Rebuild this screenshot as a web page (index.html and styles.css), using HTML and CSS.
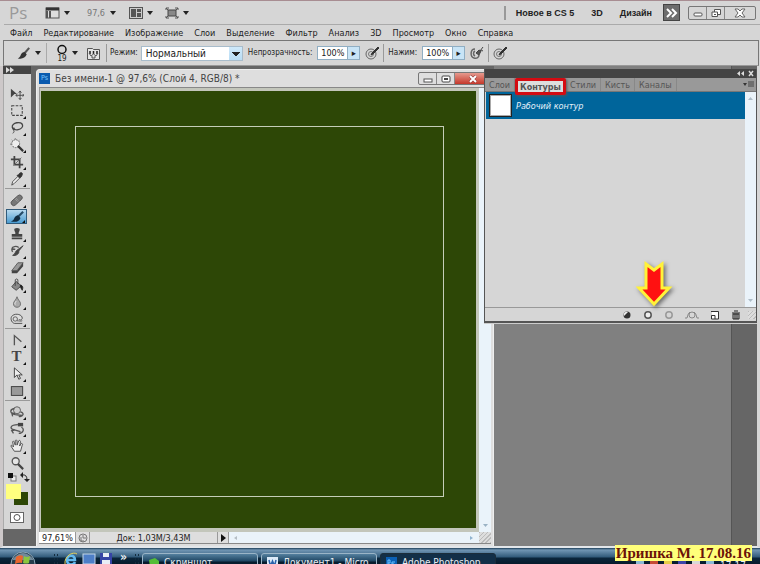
FILE: index.html
```html
<!DOCTYPE html>
<html lang="ru">
<head>
<meta charset="utf-8">
<title>Без имени-1</title>
<link rel="stylesheet" href="styles.css">
</head>
<body>
<div class="app">
  <header class="appbar">
    <span class="logo">Ps</span>
    <button class="drop drop-bridge" aria-label="Вид"><svg width="15" height="12" viewBox="0 0 15 12"><rect x="1" y="1" width="13" height="10" fill="#ddd" stroke="#555"/><path d="M1 2h13" stroke="#333" stroke-width="3"/><path d="M2 4v7M5 4v7" stroke="#555" stroke-width="2"/></svg></button>
    <button class="drop drop-scale">97,6</button>
    <button class="drop drop-arrange" aria-label="Упорядочить"><svg width="14" height="12" viewBox="0 0 14 12"><rect x=".5" y=".5" width="13" height="11" fill="#ccc" stroke="#555"/><path d="M2 2h5v8H2zM8 2h4v3H8zM8 6h4v4H8z" fill="#555"/></svg></button>
    <button class="drop" aria-label="Режим экрана"><svg width="14" height="12" viewBox="0 0 14 12"><rect x="3" y="3" width="8" height="6" fill="#888" stroke="#444"/><path d="M1 3V1h3M10 1h3v2M1 9v2h3M10 11h3V9M1 1l2 2M13 1l-2 2M1 11l2-2M13 11l-2-2" fill="none" stroke="#555"/></svg></button>
    <nav class="spaces">
      <button class="space">Новое в CS 5</button>
      <button class="space">3D</button>
      <button class="space">Дизайн</button>
    </nav>
    <button class="more" aria-label="Ещё"><svg width="12" height="10" viewBox="0 0 12 10"><path d="M1 1l4 4-4 4M6 1l4 4-4 4" fill="none" stroke="#fff" stroke-width="2"/></svg></button>
    <div class="winbtns">
      <button aria-label="Свернуть"><svg width="10" height="10" viewBox="0 0 10 10"><rect x="1" y="5" width="8" height="3" rx="1" fill="#fff" stroke="#555"/></svg></button>
      <button aria-label="Восстановить"><svg width="10" height="10" viewBox="0 0 10 10"><path d="M3.500 1.500h6v5h-6z" fill="#fff" stroke="#555"/><path d="M1 4h5.500v4.500H1z" fill="#fff" stroke="#555"/><path d="M3 6.500h2" stroke="#555"/></svg></button>
      <button class="wide" aria-label="Закрыть"><svg width="12" height="10" viewBox="0 0 12 10"><path d="M1 1h3l2 2 2-2h3L8 5l3 4H8L6 7 4 9H1l3-4z" fill="#fff" stroke="#666"/></svg></button>
    </div>
  </header>

  <nav class="menubar">
    <button>Файл</button><button>Редактирование</button><button>Изображение</button><button>Слои</button><button>Выделение</button><button>Фильтр</button><button>Анализ</button><button>3D</button><button>Просмотр</button><button>Окно</button><button>Справка</button>
  </nav>

  <div class="options">
    <button class="drop opt-tool" aria-label="Кисть"><svg width="15" height="13" viewBox="0 0 16 16"><path d="M15 1L9 8" stroke="#555" stroke-width="2.500"/><path d="M9 6l3 3c-2 5-6 6-11 5 3-1 3-3 4-5s3-3 4-3z" fill="#333"/></svg></button>
    <button class="drop opt-size"><span class="tip"><svg width="12" height="11" viewBox="0 0 12 11"><circle cx="6" cy="5.500" r="4" fill="none" stroke="#111" stroke-width="1.500"/></svg>19</span></button>
    <button class="opt-panel" aria-label="Панель кистей"><svg width="13" height="13" viewBox="0 0 13 13"><path d="M.5 1.500h5l1 1h6v10H.5z" fill="#e4e4e4" stroke="#555"/><path d="M3 4v3M6.500 4v3M10 4v3" stroke="#222" stroke-width="1.500"/><path d="M2 6l2 3 2.500-2L9 9l2-3M5 9v2h3V9" fill="none" stroke="#555"/></svg></button>
    <label for="mode" class="mode-label">Режим:</label>
    <select id="mode" class="mode"><option>Нормальный</option></select>
    <label for="opacity">Непрозрачность:</label>
    <span class="num"><input id="opacity" value="100%"><button aria-label="Изменить непрозрачность">▸</button></span>
    <button class="target" aria-label="Нажим и непрозрачность"><svg width="14" height="14" viewBox="0 0 14 14"><circle cx="6" cy="8" r="5" fill="none" stroke="#666"/><circle cx="6" cy="8" r="2.500" fill="none" stroke="#777"/><path d="M13 1L7 7l-1 2 2-1 6-6z" fill="#333" stroke="#333"/></svg></button>
    <label for="flow" class="sep">Нажим:</label>
    <span class="num"><input id="flow" value="100%"><button aria-label="Изменить нажим">▸</button></span>
    <button class="target" aria-label="Аэрограф"><svg width="14" height="14" viewBox="0 0 14 14"><path d="M5 3C0 3 0 11 4 12c3 1 5-1 5-3M5 5c-2 1-2 4 0 5" fill="none" stroke="#666" stroke-width="1.500"/><path d="M6 7l3 2 2-4-2-1zM10 5l3-4M11 4l2 1" fill="#555" stroke="#444"/></svg></button>
    <button class="target sep" aria-label="Нажим и размер"><svg width="14" height="14" viewBox="0 0 14 14"><circle cx="6" cy="8" r="5" fill="none" stroke="#666"/><circle cx="6" cy="8" r="2.500" fill="none" stroke="#777"/><path d="M13 1L7 7l-1 2 2-1 6-6z" fill="#333" stroke="#333"/></svg></button>
  </div>

  <main class="work">
    <aside class="tools">
      <div class="tools-head"><svg width="8" height="6" viewBox="0 0 8 6"><path d="M0 0l4 3-4 3zM4 0l4 3-4 3z" fill="#ddd"/></svg></div>
      <div class="tools-body">
        <div class="group">
          <button class="plain" aria-label="Перемещение"><svg viewBox="0 0 16 16"><path d="M1 2l7 6H5l-4 4z" fill="#444"/><path d="M11.500 5v9M7 9.500h9M10 6.500l1.500-2 1.500 2M10 12.500l1.500 2 1.500-2M8.500 8l-2 1.500 2 1.500M14.500 8l1.500 1.500-1.500 1.500" fill="none" stroke="#444"/></svg></button>
          <button aria-label="Область"><svg viewBox="0 0 16 16"><rect x="2" y="2" width="12" height="11" fill="none" stroke="#444" stroke-width="1.200" stroke-dasharray="3 1.500"/></svg></button>
          <button aria-label="Лассо"><svg viewBox="0 0 16 16"><ellipse cx="8.500" cy="6" rx="6" ry="4" transform="rotate(-12 8 6)" fill="none" stroke="#444" stroke-width="1.500"/><path d="M4 8c-2 1 0 3 1 1s-2-1-1 1 1 3-1 4" fill="none" stroke="#444"/></svg></button>
          <button aria-label="Волшебная палочка"><svg viewBox="0 0 16 16"><circle cx="6.500" cy="6.500" r="4.500" fill="#eee" stroke="#555" stroke-dasharray="2 1"/><path d="M9 9l6 6" stroke="#333" stroke-width="2.500"/><path d="M6 0v2M0 7h2M2 2l1 1M11 2l-1 1" stroke="#777"/></svg></button>
          <button aria-label="Рамка"><svg viewBox="0 0 16 16"><path d="M5 1v10h10M1 5h10v10" fill="none" stroke="#444" stroke-width="2"/><path d="M4 12l9-9" stroke="#666"/></svg></button>
          <button aria-label="Пипетка"><svg viewBox="0 0 16 16"><path d="M10 3c1-3 5-3 4 0s-2 3-3 4L8 4z" fill="#333" stroke="#333"/><path d="M9 5L3 11l-1 4 3-2 6-6z" fill="#eee" stroke="#444"/></svg></button>
        </div>
        <div class="group">
          <button aria-label="Восстанавливающая кисть"><svg viewBox="0 0 16 16"><rect x="0" y="5" width="15" height="6" rx="3" transform="rotate(-42 8 8)" fill="#777" stroke="#555"/><path d="M6 7l4 4M7 6l4 4" stroke="#bbb" stroke-dasharray="1 1"/></svg></button>
          <button class="on" aria-label="Кисть"><svg viewBox="0 0 16 16"><path d="M15 2L9 8" stroke="#254a66" stroke-width="2.500"/><path d="M9 6l3 3c-2 5-6 5-11 4 3-1 3-2 4-4s3-3 4-3z" fill="#122b40"/></svg></button>
          <button aria-label="Штамп"><svg viewBox="0 0 16 16"><path d="M5 2q3-2 6 0c1 2-2 4-1 6h4v3H2V8h4c1-2-2-4-1-6z" fill="#444"/><path d="M2 13h12" stroke="#444" stroke-width="2"/></svg></button>
          <button aria-label="Архивная кисть"><svg viewBox="0 0 16 16"><path d="M15 2l-5 6c1 3-3 6-7 5 3-1 3-5 5-6z" fill="#444" stroke="#444"/><path d="M3 9C0 4 6 1 10 4M3 3v3h3" fill="none" stroke="#555" stroke-width="1.500"/></svg></button>
          <button aria-label="Ластик"><svg viewBox="0 0 16 16"><path d="M9 2h6l-7 9H2z" fill="#999" stroke="#555"/><path d="M2 11h6v3H2zM8 11l7-9v4l-7 8z" fill="#444"/></svg></button>
          <button aria-label="Заливка"><svg viewBox="0 0 16 16"><path d="M7 4l6 5-6 5-5-4z" fill="#888" stroke="#444"/><path d="M6 9V2q2-2 3 0v5" fill="none" stroke="#444"/><path d="M12 8c3 1 3 3 2 6-1-2-3-4-2-6z" fill="#222" stroke="#222"/></svg></button>
          <button aria-label="Размытие"><svg viewBox="0 0 16 16"><path d="M8 2c1 4 4 5 4 8s-2 4-4 4-4-1-4-4 3-4 4-8z" fill="#aaa" stroke="#666"/><path d="M7 7c-1 2-2 2-1 4" stroke="#eee" fill="none"/></svg></button>
          <button aria-label="Губка"><svg viewBox="0 0 16 16"><path d="M14 13H5c-4-1-5-7-2-9 4-3 11-1 11 3 0 2-3 3-4 1" fill="#ddd" stroke="#444"/><circle cx="6" cy="8" r="2.500" fill="none" stroke="#555"/><path d="M8 10c2 0 4 1 6 0" fill="none" stroke="#555"/></svg></button>
        </div>
        <div class="group">
          <button aria-label="Перо"><svg viewBox="0 0 16 16"><path d="M5 14V3l8 7" fill="none" stroke="#555" stroke-width="1.500"/></svg></button>
          <button class="type" aria-label="Текст">T</button>
          <button aria-label="Выделение контура"><svg viewBox="0 0 16 16"><path d="M5 1v11l3-3 2 5 2-1-2-4h4z" fill="#eee" stroke="#333"/></svg></button>
          <button aria-label="Прямоугольник"><svg viewBox="0 0 16 16"><rect x="1.500" y="3" width="13" height="10" fill="#999" stroke="#333"/></svg></button>
        </div>
        <div class="group">
          <button aria-label="Поворот 3D"><svg viewBox="0 0 16 16"><circle cx="8" cy="6" r="4" fill="#ccc" stroke="#555"/><path d="M5 4C-1 5 0 10 6 11l8 1M12 8c5 1 3 6-2 5M3 13l-1-4 4 1" fill="none" stroke="#555" stroke-width="1.500"/></svg></button>
          <button aria-label="Камера 3D"><svg viewBox="0 0 16 16"><path d="M9 3C0 3-1 8 5 9l7 2M13 6c4 2 2 7-3 7M4 13l-2-3 4-1" fill="none" stroke="#555" stroke-width="1.500"/><path d="M9 1h6v4H9z" fill="#444"/></svg></button>
          <button aria-label="Рука"><svg viewBox="0 0 16 16"><path d="M5 14L1 8c0-1 1-1 2 0l1 1-1-6c1-1 2 0 2 1l1 3V2c0-1 2-1 2 0v5l2-5c1-1 2 0 2 1l-1 5 2-3c1 0 2 1 1 2l-2 7z" fill="#eee" stroke="#444"/></svg></button>
          <button class="plain" aria-label="Масштаб"><svg viewBox="0 0 16 16"><circle cx="6.500" cy="6" r="4" fill="#e5e5e5" stroke="#555" stroke-width="1.500"/><path d="M9 9l6 6" stroke="#444" stroke-width="2.500"/></svg></button>
        </div>
        <svg class="swatches" width="26" height="36" viewBox="0 0 26 36"><rect x="6" y="4" width="5" height="5" fill="#eee" stroke="#777"/><rect x="3" y="1" width="5" height="5" fill="#111"/><path d="M17 3q5-1 5 5" fill="none" stroke="#222"/><path d="M18 0v6l-3-3zM19 7h6l-3 3z" fill="#222"/><rect x="9" y="20" width="14" height="13" fill="#2d4706"/><rect x="1" y="12" width="15" height="15" fill="#ffff7f"/></svg>
        <button class="mask" aria-label="Быстрая маска"><svg width="14" height="11" viewBox="0 0 14 11"><rect x=".5" y=".5" width="13" height="10" fill="#fff" stroke="#666"/><circle cx="7" cy="5.500" r="3" fill="none" stroke="#555"/></svg></button>
      </div>
    </aside>

    <section class="doc">
      <div class="doc-title">
        <span class="ps">Ps</span>
        <h1>Без имени-1 @ 97,6% (Слой 4, RGB/8) *</h1>
        <div class="winbtns docbtns">
          <button aria-label="Свернуть"><svg width="10" height="8" viewBox="0 0 10 8"><rect x="1" y="4" width="8" height="3" fill="#fff" stroke="#555"/></svg></button>
          <button aria-label="Развернуть"><svg width="10" height="8" viewBox="0 0 10 8"><rect x="1" y="1" width="8" height="6" rx="1" fill="#fff" stroke="#444"/><rect x="3.500" y="3.500" width="3" height="1" stroke="#444"/></svg></button>
          <button class="close" aria-label="Закрыть"><svg width="10" height="8" viewBox="0 0 10 8"><path d="M2 1l6 6M8 1L2 7" stroke="#833" stroke-width="3"/><path d="M2 1l6 6M8 1L2 7" stroke="#fff" stroke-width="2"/></svg></button>
        </div>
      </div>
      <div class="doc-body">
        <div class="canvas"><div class="path"></div></div>
        <div class="vscroll"><svg width="7" height="4" viewBox="0 0 7 4"><path d="M1 0h5L3.500 3z" fill="#9ab2c4"/></svg></div>
      </div>
      <footer class="doc-status">
        <span class="pct">97,61%</span>
        <span class="clock"><svg width="10" height="10" viewBox="0 0 10 10"><circle cx="5" cy="5" r="4" fill="none" stroke="#777"/><path d="M5 2v3h3M3 4v4h3" fill="none" stroke="#777"/></svg></span>
        <span class="size">Док: 1,03M/3,43M</span>
        <button class="play" aria-label="Показать"><svg width="5" height="8" viewBox="0 0 5 8"><path d="M0 0l5 4-5 4z" fill="#111"/></svg></button>
        <span class="hscroll"><svg width="4" height="6" viewBox="0 0 4 6"><path d="M3 1v4L0 3z" fill="#b4bdc4"/></svg><svg width="4" height="6" viewBox="0 0 4 6"><path d="M0 1l3 2-3 2z" fill="#8fb3cf"/></svg></span>
        <span class="grip"></span>
      </footer>
    </section>
    <div class="desk"></div>
    <div class="dock"></div>

    <section class="panel">
      <div class="panel-head"><svg width="22" height="7" viewBox="0 0 22 7"><path d="M6 1v5L3 3.500zM10 1v5L7 3.500z" fill="#ddd"/><path d="M15 1l4 5M19 1l-4 5" stroke="#ddd" stroke-width="1.500"/></svg></div>
      <div class="tabs">
        <button>Слои</button><button class="active">Контуры</button><button>Стили</button><button>Кисть</button><button>Каналы</button>
        <button class="pmenu" aria-label="Меню панели"><svg width="11" height="7" viewBox="0 0 11 7"><path d="M0 2h4L2 5z" fill="#333"/><path d="M5 1h6M5 3h6M5 5h6" stroke="#444"/></svg></button>
      </div>
      <div class="panel-main">
        <div class="list"><div class="row"><span class="thumb"></span><em>Рабочий контур</em></div></div>
        <div class="vscroll pscroll"><svg width="7" height="4" viewBox="0 0 7 4"><path d="M1 4h5L3.500 1z" fill="#aebdc8"/></svg><svg width="7" height="4" viewBox="0 0 7 4"><path d="M1 0h5L3.500 3z" fill="#aebdc8"/></svg></div>
      </div>
      <div class="panel-foot">
        <button aria-label="Залить контур"><svg width="10" height="10" viewBox="0 0 10 10"><circle cx="5" cy="5" r="3.500" fill="#333"/><path d="M2 6a3 3 0 014-4z" fill="#eee"/></svg></button>
        <button aria-label="Обвести контур"><svg width="10" height="10" viewBox="0 0 10 10"><circle cx="5" cy="5" r="3.200" fill="#eee" stroke="#555" stroke-width="1.500"/></svg></button>
        <button aria-label="Контур в выделение"><svg width="10" height="10" viewBox="0 0 10 10"><circle cx="5" cy="5" r="3.200" fill="none" stroke="#999" stroke-width="1.500"/></svg></button>
        <button aria-label="Выделение в контур"><svg width="14" height="10" viewBox="0 0 14 10"><circle cx="7" cy="5" r="3" fill="none" stroke="#888"/><path d="M0 8h2q1-5 3-6M14 8h-2q-1-5-3-6" fill="none" stroke="#888"/></svg></button>
        <button aria-label="Новый контур"><svg width="10" height="10" viewBox="0 0 10 10"><path d="M2 2h6v7H2z" fill="#fff"/><path d="M1 1.500h7.500V9H1.500V5.500H5V9" fill="none" stroke="#333"/></svg></button>
        <button aria-label="Удалить контур"><svg width="10" height="10" viewBox="0 0 10 10"><path d="M2 4h6v5H2z" fill="#ccc" stroke="#222"/><path d="M1 3h8M3 1h4M4 4v5M6 4v5" stroke="#222"/></svg></button>
        <span class="grip"></span>
      </div>
      <svg class="pointer" width="42" height="48" viewBox="0 0 42 48"><path d="M11 3l8 6 8-6v24h7L19 43 4 27h7z" fill="#f11" stroke="#fff23a" stroke-width="3"/></svg>
    </section>
  </main>

  <footer class="taskbar">
    <button class="start" aria-label="Пуск"><svg width="26" height="26" viewBox="0 0 26 26"><circle cx="13" cy="13" r="12" fill="#253c4c" stroke="#8ba4b5"/><path d="M2 9q11-14 22 0z" fill="#71899a"/><path d="M6 6q4-3 7-1l-1 7q-3-1-7 1z" fill="#e9662f"/><path d="M14 5q3 2 6 0l-1 7q-3 1-6 0z" fill="#8bc63e"/><path d="M5 14q4-2 7 0v6H5z" fill="#49a0e0"/><path d="M13 14h7v6h-7z" fill="#f4cc38"/></svg></button>
    <span class="dots"></span>
    <span class="quick">
      <svg width="14" height="14" viewBox="0 0 14 14"><path d="M3 8h8c0-6-8-5-8 0 0 6 7 5 8 2" fill="none" stroke="#63b9ef" stroke-width="2.500"/><path d="M1 12C0 4 9-1 13 2" fill="none" stroke="#e8d35a"/></svg>
      <svg width="14" height="14" viewBox="0 0 14 14"><rect x="1" y="2" width="12" height="10" fill="#4e7fc7" stroke="#c4d7e8"/></svg>
      <svg width="12" height="14" viewBox="0 0 12 14"><rect width="12" height="14" y="1" fill="#3644a6"/><path d="M3 1h6v4H3zM2 8h8v6H2z" fill="#e8edf6"/></svg>
    </span>
    <span class="chev">»</span>
    <span class="dots"></span>
    <button class="task"><svg width="11" height="11" viewBox="0 0 11 11"><path d="M1 3l6-2 4 3v6H2z" fill="#55bd37"/></svg>Скриншот</button>
    <button class="task"><svg width="11" height="11" viewBox="0 0 11 11"><rect width="11" height="11" fill="#dceaf8"/><path d="M2 3l1.500 6 2-5 2 5L9 3" fill="none" stroke="#2861ab" stroke-width="1.500"/></svg>Документ1 - Micro...</button>
    <button class="task pressed"><svg width="11" height="11" viewBox="0 0 11 11"><rect width="11" height="11" fill="#0b60b5"/><path d="M2 9V3h2v3H2M9 5H6v2h2v2H6" fill="none" stroke="#6bc2ff"/></svg>Adobe Photoshop ...</button>
    <span class="tray"><i></i><i></i><i></i><i></i><i></i><i></i><span>17:17</span></span>
  </footer>
  <div class="stamp">Иришка М. 17.08.16</div>
</div>
</body>
</html>
```
FILE: styles.css
```css
* { box-sizing: border-box; }
body { margin: 0; background: #d6d6d6; overflow: hidden; font-family: "DejaVu Sans Condensed", "DejaVu Sans", sans-serif; font-size: 9px; line-height: 12px; color: #222; }
button { appearance: none; border: 0; padding: 0; margin: 0; background: none; font: inherit; color: inherit; display: flex; align-items: center; justify-content: center; }
svg { display: block; flex: none; }
.app { position: relative; height: 100vh; display: flex; flex-direction: column; border-top: 1px solid #a88d92; }

.appbar { flex: none; height: 24px; display: flex; align-items: center; margin-left: 4px; padding: 0 4px 0 5px; border-bottom: 1px solid #aaa; }
.logo { width: 36px; font: 17px/20px "Open Sans", sans-serif; color: #999; }
.drop { gap: 4px; }
.drop::after { content: ""; border: 3px solid transparent; border-top: 4px solid #222; border-bottom: 0; }
.drop-bridge { margin-right: 17px; }
.drop-scale { margin-right: 13px; color: #777; gap: 5px; }
.drop-arrange { margin-right: 12px; }
.spaces { margin-left: auto; display: flex; align-items: center; gap: 17px; padding-left: 10px; border-left: 2px solid #999; font-family: "Liberation Sans", sans-serif; font-weight: bold; height: 14px; }
.more { width: 17px; height: 17px; background: #6d6d6d; border: 1px solid #444; margin-left: 11px; }
.winbtns { display: flex; margin-left: 8px; border: 1px solid #777; border-radius: 2px; height: 14px; }
.winbtns button { width: 18px; border-right: 1px solid #888; }
.winbtns button:last-child { border-right: 0; }
.winbtns .wide { width: 30px; }

.menubar { flex: none; height: 15px; display: flex; gap: 11px; padding-left: 10px; }
.options { flex: none; height: 26px; display: flex; align-items: center; margin: 0 1px 0 3px; padding-left: 12px; border: 1px solid #777; border-bottom-color: #999; }
.opt-tool { margin-right: 5px; }
.opt-size { padding-left: 9px; border-left: 1px solid #aaa; height: 20px; margin-right: 9px; }
.tip { display: flex; flex-direction: column; align-items: center; font-size: 8px; line-height: 8px; }
.options label { margin-right: 5px; font-size: 8px; line-height: 18px; }
.opt-panel { margin-right: 6px; }
.options .mode-label { border-left: 1px solid #999; padding-left: 3px; margin-right: 3px; }
.mode { appearance: none; width: 102px; height: 15px; padding: 0 14px 0 4px; border: 1px solid #a8bccb; border-radius: 0; font: 10px/13px "DejaVu Sans Condensed", sans-serif; color: #222; background: linear-gradient(45deg, transparent 50%, #222 50%) right 6px top 5px / 4px 4px no-repeat, linear-gradient(-45deg, transparent 50%, #222 50%) right 2px top 5px / 4px 4px no-repeat, linear-gradient(#cfe9fa, #b8dcf4) right / 13px 100% no-repeat, #fff; margin-right: 5px; }
.num { display: flex; width: 43px; height: 14px; border: 1px solid #90aec3; background: #fff; margin-right: 5px; }
.num input { width: 29px; min-width: 0; border: 0; padding: 0 0 0 3px; font: 9px/12px "DejaVu Sans Condensed", sans-serif; background: none; color: #222; }
.num button { width: 12px; background: #c8e4f6; border-left: 1px solid #90aec3; }
.target { height: 18px; margin-right: 4px; }
.sep { border-left: 1px solid #999; padding-left: 4px; }

.work { position: relative; flex: 1; min-height: 0; display: flex; background: #666; border-left: 3px solid #cdc8c9; border-right: 3px solid #d6d6d6; border-bottom: 2px solid #e2e6ea; }
.tools { flex: none; width: 28px; display: flex; flex-direction: column; }
.tools-head { height: 8px; padding: 1px 3px; background: #444; }
.tools-body { background: #d6d6d6; padding: 11px 1px 6px; border-left: 1px solid #aaa; }
.group + .group { border-top: 1px solid #999; margin-top: 1px; padding-top: 2px; }
.group button { position: relative; width: 21px; height: 17px; margin-left: 1px; }
.group svg { width: 14px; height: 14px; }
.group button::after { content: ""; position: absolute; right: 1px; bottom: 0; border-left: 3px solid transparent; border-bottom: 3px solid #111; }
.group .plain::after { display: none; }
.group .on { background: linear-gradient(#b8d9ef, #4a9bd0); border: 1px solid #315b7b; height: 15px; margin-top: 1px; margin-bottom: 1px; }
.group .type { font: bold 15px/17px "Liberation Serif", serif; color: #444; }
.swatches { margin-top: 1px; }
.mask { margin: 4px 0 0 5px; }

.doc { flex: none; width: 60.8%; margin: 3px 0 0 5px; display: flex; flex-direction: column; background: #dedede; border: 1px solid #eee; border-bottom: 0; border-radius: 4px 4px 0 0; padding: 0 2px 2px; }
.doc-title { flex: none; height: 17px; display: flex; align-items: center; gap: 5px; }
.ps { width: 11px; height: 11px; background: #0a5bae; color: #7cc8ff; font-size: 7px; line-height: 11px; text-align: center; }
.doc-title h1 { margin: 0; flex: 1; font-size: 10px; font-weight: normal; line-height: 14px; color: #444; }
.docbtns { height: 13px; }
.docbtns .close { width: 35px; background: linear-gradient(#e69a8e, #c5382a); }
.doc-body { flex: 1; display: flex; border-top: 1px solid #888; border-left: 1px solid #999; }
.canvas { flex: 1; display: flex; padding: 35px 32px 31px 34px; background: #2d4706; border: solid #c3c6bb; border-width: 3px 3px 4px 1px; }
.path { flex: 1; border: 1px solid #c4cdb8; }
.vscroll { width: 12px; background: #eaf3fa; display: flex; flex-direction: column; align-items: center; justify-content: flex-end; padding: 4px 0; }
.doc-status { flex: none; height: 12px; display: flex; align-items: stretch; border-bottom: 1px solid #888; line-height: 12px; }
.pct { width: 36px; padding-left: 3px; background: #fff; }
.clock { width: 15px; padding: 1px 2px; border: solid #999; border-width: 0 1px; }
.size { width: 127px; text-align: center; }
.play { width: 12px; border: solid #999; border-width: 0 1px; }
.hscroll { flex: 1; background: #eaf3fa; display: flex; align-items: center; justify-content: space-between; padding: 0 5px; }
.grip { width: 12px; background: repeating-linear-gradient(135deg, #bbb 0 1px, #ddd 1px 3px); }
.desk { flex: 1; background: #808080; }
.dock { flex: none; width: 26px; border-left: 1px solid #555; background: #666; }

.panel { position: absolute; top: 3px; right: 0; width: 273px; height: 254px; display: flex; flex-direction: column; background: #d6d6d6; border: solid #555; border-width: 0 1px 2px; box-shadow: 0 1px 0 #ccc; }
.panel-head { flex: none; height: 9px; background: #444; display: flex; justify-content: flex-end; padding-top: 1px; }
.tabs { flex: none; height: 14px; display: flex; background: #999; border-bottom: 1px solid #777; color: #555; }
.tabs button { padding: 0 4px; border-right: 1px solid #888; }
.tabs button:first-child { width: 30px; }
.tabs .active { flex: none; align-self: flex-start; width: 51px; height: 17px; background: #ddd; border: 3px solid #d40b12; border-radius: 2px; padding: 0; font-weight: bold; z-index: 1; box-shadow: 1px 1px 3px #555; }
.tabs .pmenu { margin-left: auto; border: 0; padding-right: 2px; }
.panel-main { flex: 1; display: flex; }
.list { flex: 1; }
.row { height: 27px; display: flex; align-items: center; gap: 4px; padding-left: 3px; margin-left: 1px; background: #00659b; color: #e5f2fa; }
.thumb { width: 23px; height: 23px; border: 2px solid #222; outline: 1px solid #aaa; outline-offset: -2px; background: #fff; }
.pscroll { width: 11px; justify-content: space-between; }
.panel-foot { flex: none; height: 14px; border-top: 1px solid #999; display: flex; align-items: center; justify-content: flex-end; gap: 11px; }
.panel-foot .grip { width: 8px; height: 8px; margin-left: -4px; }
.pointer { position: absolute; left: 150px; bottom: 12px; filter: drop-shadow(2px 2px 2px rgba(0, 0, 0, .5)); }

.taskbar { flex: none; height: 16px; overflow: hidden; display: flex; align-items: flex-start; background: linear-gradient(#1c3d57, #7196b4 2px, #315a7a 9px, #0b263c 10px, #061a2b); color: #e8eef4; }
.start { margin: 3px 17px 0 10px; }
.dots { width: 5px; height: 14px; margin-top: 5px; background: radial-gradient(#142c3e 1px, transparent 1px) 0 0 / 3px 4px; }
.quick { display: flex; gap: 4px; margin: 4px 8px 0 6px; }
.chev { margin: 3px 5px 0 0; font-size: 12px; font-weight: bold; width: 9px; }
.task { flex: none; width: 116px; height: 24px; margin: 5px 0 0 3px; padding-left: 5px; gap: 5px; align-items: flex-start; justify-content: flex-start; padding-top: 3px; border: 1px solid #9bb5c7; border-radius: 3px; background: linear-gradient(#54809f, #1f4663 7px, #071c2e 8px); font-size: 10px; white-space: nowrap; }
.pressed { background: #122f48; border-color: #1b2d3b; }
.tray { margin: 13px 14px 0 auto; display: flex; gap: 6px; align-items: flex-start; font-size: 10px; line-height: 10px; }
.tray i { width: 8px; height: 8px; background: #8dbad5; }
.tray i:nth-child(2) { background: #c64a34; }
.tray i:nth-child(3) { background: #e7cd47; }
.tray i:nth-child(4) { background: #3d44a8; }
.tray i:nth-child(5) { background: #d8d8d8; }
.stamp { position: absolute; right: 8px; bottom: 3px; padding: 0 1px; background: #ffff7a; color: #6b1208; font: bold 15px/16px "Liberation Serif", serif; white-space: nowrap; }
```
